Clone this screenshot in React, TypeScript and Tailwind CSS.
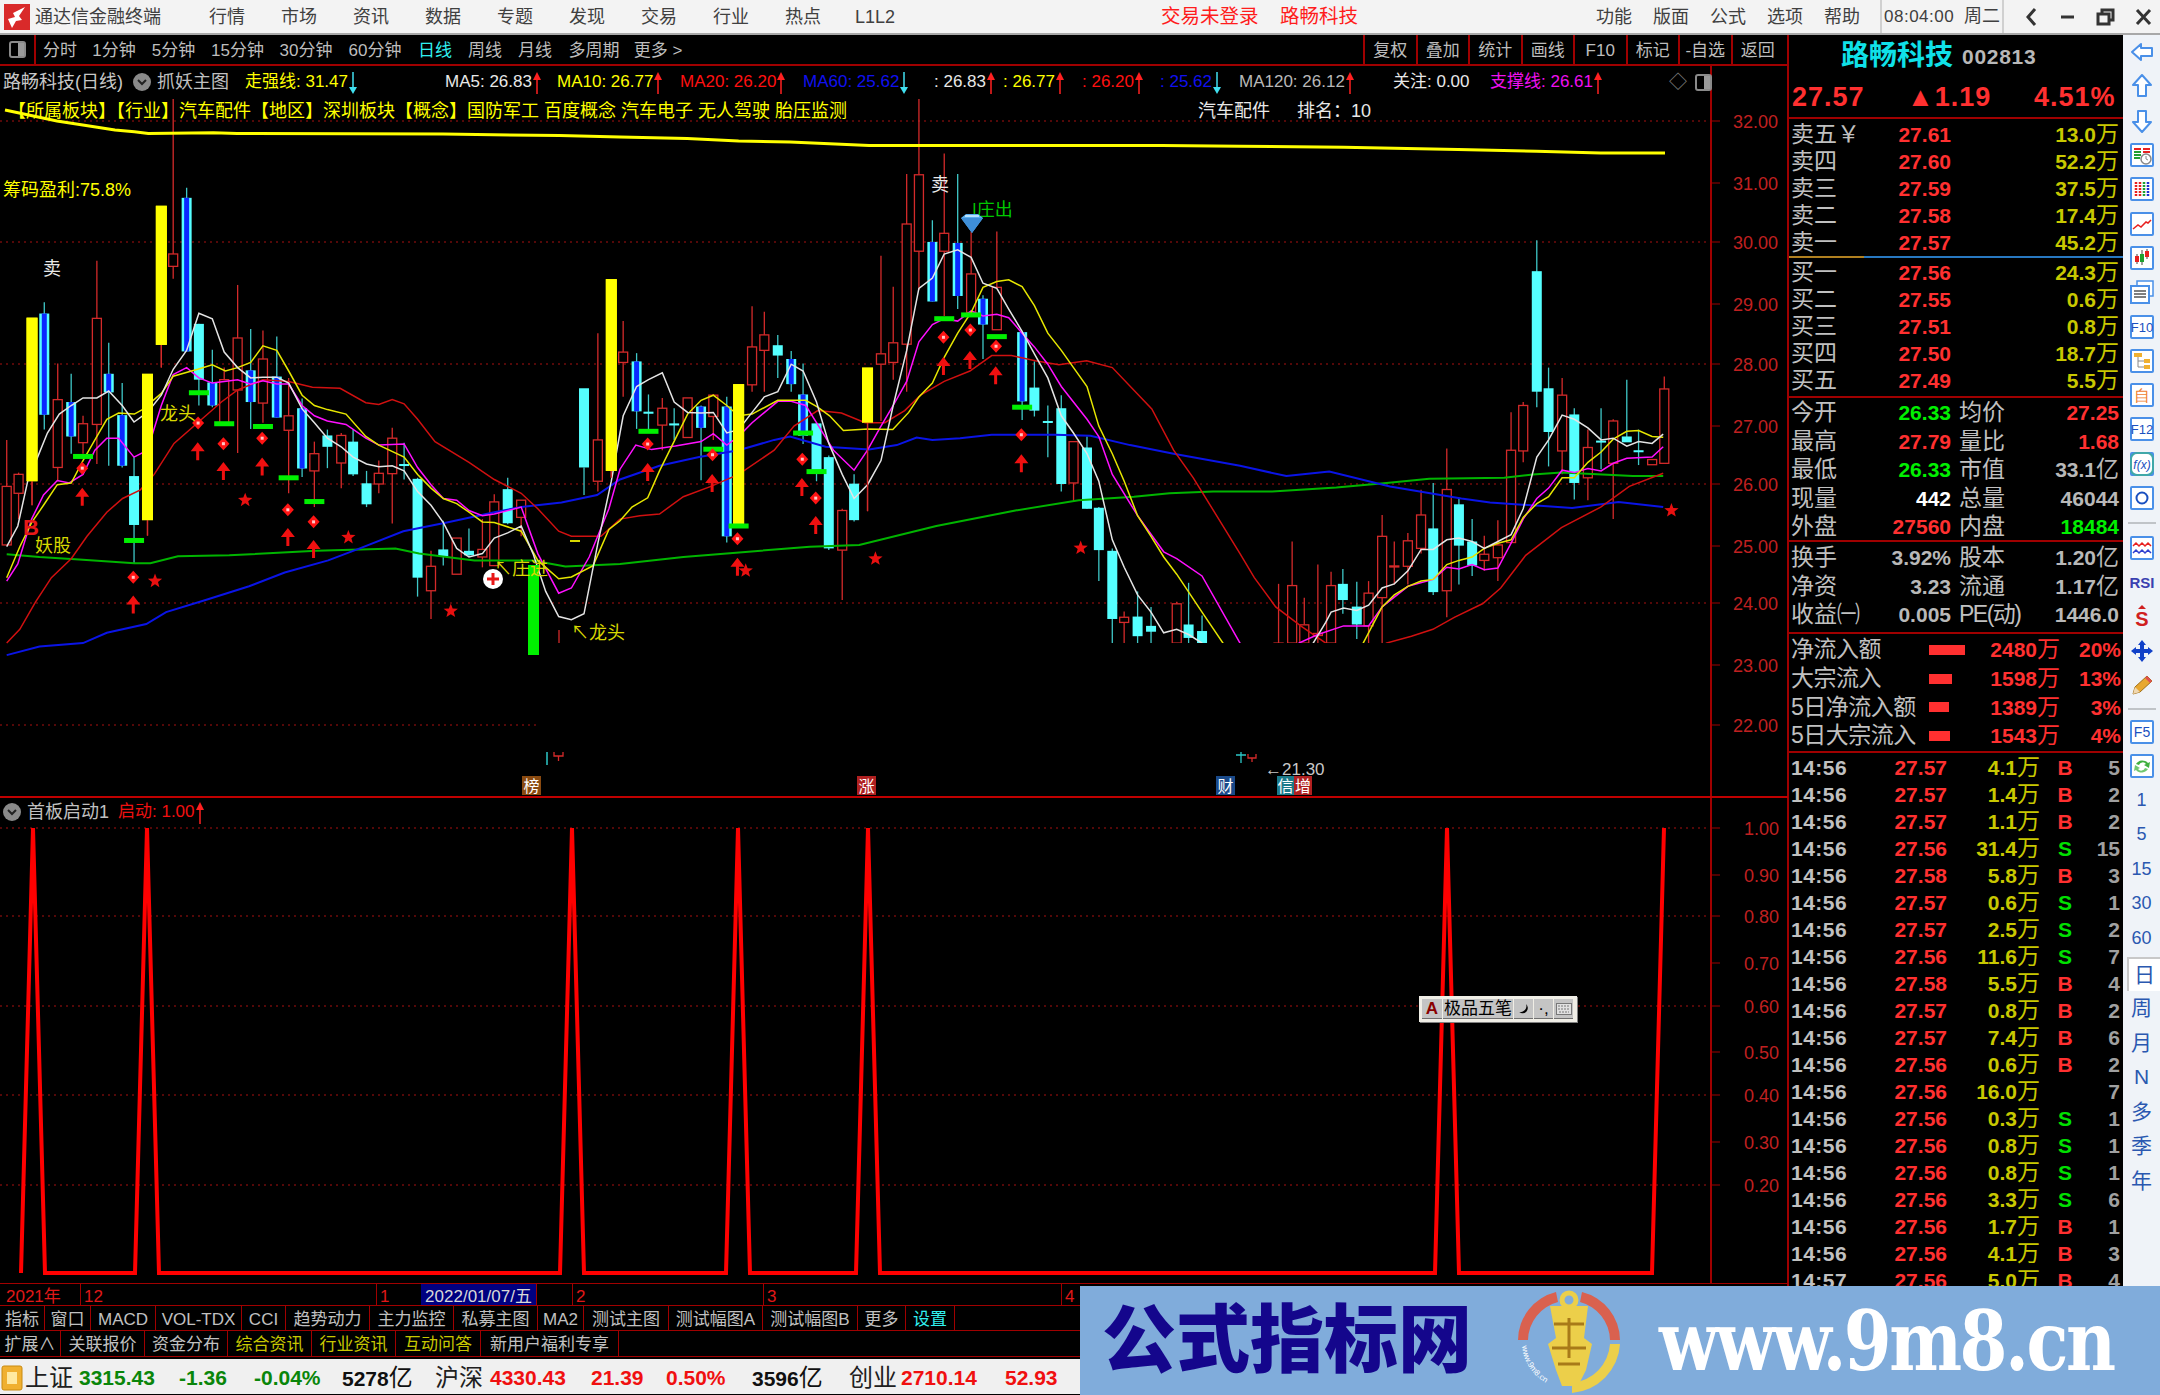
import React from "react";

type Pt = [number, number];
type Candle = [number, number, number, number, number, string];

const A = (x: number, y: number): Pt => [x / 2.529, 130 + y / 2.904];
const B = (x: number, y: number): Pt => [620 + x / 2.529, 130 + y / 2.904];
const C = (x: number, y: number): Pt => [1240 + x / 2.8, 130 + y / 2.904];

const line = (a: number[][], b: number[][], c: number[][]): Pt[] => [
    ...a.map(([x, y]) => A(x, y)),
    ...b.map(([x, y]) => B(x, y)),
    ...c.map(([x, y]) => C(x, y)),
];

const candlesA: Candle[] = [
    [17, 900, 1205, 1035, 1205, "r"], [47, 995, 1130, 1000, 1055, "r"], [81, 1020, 1090, 545, 1020, "y"], [112, 500, 870, 533, 827, "b"],
    [146, 678, 1020, 783, 980, "r"], [180, 708, 940, 790, 890, "b"], [210, 830, 940, 853, 908, "r"], [245, 380, 970, 547, 855, "r"],
    [275, 618, 975, 708, 762, "b"], [309, 735, 980, 828, 975, "b"], [339, 950, 1260, 1005, 1147, "c"], [373, 1133, 1178, 708, 1133, "y"],
    [408, 624, 690, 220, 624, "y"], [438, -90, 432, 360, 396, "r"], [472, 168, 640, 197, 643, "b"], [503, 563, 800, 563, 725, "c"],
    [537, 638, 805, 733, 800, "b"], [567, 690, 850, 725, 850, "r"], [601, 450, 938, 604, 755, "r"], [634, 578, 868, 698, 790, "b"],
    [665, 582, 850, 665, 793, "r"], [700, 600, 835, 716, 835, "b"], [730, 720, 1055, 830, 872, "r"], [764, 780, 1008, 808, 983, "b"],
    [795, 905, 1095, 940, 990, "r"], [828, 870, 982, 887, 920, "c"], [863, 880, 1040, 887, 967, "r"], [893, 870, 1005, 905, 1000, "c"],
    [927, 990, 1095, 1026, 1087, "c"], [958, 960, 1055, 997, 1028, "r"], [992, 865, 1143, 895, 998, "r"], [1022, 908, 1015, 970, 973, "c"],
    [1056, 1010, 1355, 1013, 1300, "c"], [1090, 1222, 1420, 1267, 1338, "r"], [1121, 1135, 1265, 1218, 1238, "c"], [1155, 1185, 1290, 1185, 1290, "r"],
    [1186, 1157, 1240, 1222, 1235, "c"], [1220, 1130, 1270, 1218, 1240, "r"], [1250, 1058, 1265, 1080, 1265, "r"], [1284, 1010, 1145, 1043, 1142, "c"],
    [1318, 1075, 1180, 1075, 1125, "r"], [1477, 980, 1060, 750, 980, "c"], [1512, 590, 1050, 900, 1020, "r"], [1546, 990, 1010, 433, 990, "y"],
];

const candlesB: Candle[] = [
    [8, 555, 775, 645, 675, "r"], [42, 648, 868, 672, 817, "b"], [72, 768, 870, 818, 824, "c"], [107, 778, 930, 808, 857, "r"],
    [137, 808, 900, 852, 858, "c"], [171, 778, 893, 778, 893, "r"], [205, 800, 1017, 803, 865, "b"], [236, 768, 900, 770, 832, "r"],
    [270, 775, 1198, 803, 1180, "b"], [300, 1145, 1150, 738, 1145, "y"], [334, 512, 760, 630, 740, "r"], [365, 528, 760, 595, 640, "r"],
    [399, 595, 720, 625, 655, "c"], [433, 642, 760, 665, 738, "b"], [463, 678, 912, 768, 888, "b"], [497, 850, 1020, 852, 990, "c"],
    [528, 945, 1220, 950, 1215, "c"], [562, 1100, 1365, 1105, 1220, "r"], [592, 1000, 1137, 1027, 1133, "c"], [626, 850, 1107, 690, 850, "y"],
    [660, 365, 845, 650, 680, "r"], [691, 455, 725, 618, 675, "r"], [725, 128, 760, 273, 622, "r"], [756, -90, 465, 130, 352, "r"],
    [790, 262, 498, 325, 498, "b"], [820, 68, 540, 300, 352, "r"], [854, 128, 520, 328, 482, "b"], [888, 295, 530, 418, 530, "r"],
    [918, 480, 665, 490, 565, "b"], [953, 295, 580, 457, 580, "r"], [1017, 590, 842, 587, 788, "b"], [1048, 672, 832, 748, 815, "c"],
    [1082, 800, 950, 845, 850, "c"], [1116, 770, 1050, 808, 1028, "c"], [1147, 905, 1080, 905, 1025, "r"], [1181, 890, 1100, 922, 1100, "c"],
    [1211, 1095, 1310, 1097, 1220, "c"], [1245, 1215, 1490, 1222, 1420, "c"], [1275, 1398, 1490, 1415, 1430, "r"], [1309, 1340, 1490, 1413, 1470, "c"],
    [1343, 1385, 1490, 1440, 1457, "c"], [1408, 1370, 1490, 1376, 1490, "r"], [1438, 1315, 1490, 1436, 1475, "c"], [1472, 1410, 1490, 1455, 1490, "c"],
];

const candlesC: Candle[] = [
    [108, 1318, 1490, 1490, 1490, "r"], [146, 1195, 1490, 1323, 1490, "r"], [180, 1358, 1490, 1437, 1490, "r"], [218, 1262, 1490, 1462, 1468, "r"],
    [255, 1283, 1490, 1323, 1490, "r"], [288, 1275, 1405, 1318, 1365, "c"], [327, 1312, 1478, 1384, 1436, "c"], [360, 1310, 1490, 1345, 1440, "r"],
    [398, 1118, 1490, 1180, 1358, "r"], [432, 1195, 1320, 1266, 1268, "r"], [470, 1170, 1320, 1193, 1267, "r"], [507, 1045, 1230, 1118, 1215, "r"],
    [541, 1025, 1350, 1157, 1342, "c"], [579, 925, 1415, 1044, 1338, "r"], [613, 1068, 1320, 1087, 1207, "c"], [650, 1130, 1295, 1195, 1265, "c"],
    [684, 1178, 1280, 1232, 1250, "r"], [722, 1133, 1310, 1205, 1242, "r"], [759, 820, 1200, 930, 1198, "r"], [793, 790, 965, 800, 932, "r"],
    [831, 320, 805, 410, 760, "c"], [864, 690, 977, 750, 877, "c"], [902, 720, 1000, 770, 932, "r"], [936, 808, 1073, 826, 1025, "c"],
    [974, 870, 1075, 922, 1010, "r"], [1011, 808, 985, 902, 906, "c"], [1045, 840, 1130, 845, 968, "r"], [1083, 725, 905, 890, 907, "c"],
    [1116, 870, 973, 930, 934, "c"], [1154, 957, 972, 957, 972, "r"], [1188, 716, 968, 752, 968, "r"],
];

const white = line(
    [[17, 1210], [45, 1150], [70, 1020], [95, 950], [120, 880], [150, 825], [180, 800], [210, 778], [245, 778], [275, 758], [309, 800], [339, 848], [373, 820], [408, 770], [438, 695], [472, 640], [503, 532], [537, 548], [567, 645], [601, 690], [634, 720], [665, 718], [700, 718], [730, 735], [764, 810], [795, 850], [828, 895], [863, 920], [893, 950], [927, 970], [958, 978], [992, 975], [1022, 990], [1056, 1050], [1090, 1090], [1121, 1140], [1155, 1215], [1186, 1240], [1220, 1230], [1250, 1185], [1284, 1170], [1318, 1150], [1348, 1230], [1380, 1340], [1413, 1413], [1445, 1422], [1477, 1405], [1512, 1200], [1546, 1020]],
    [[0, 880], [8, 830], [42, 745], [72, 725], [107, 705], [137, 790], [171, 820], [205, 822], [236, 820], [270, 880], [300, 870], [334, 820], [365, 775], [399, 760], [433, 680], [463, 700], [497, 790], [528, 910], [562, 1000], [592, 1070], [626, 1030], [660, 960], [691, 800], [725, 640], [756, 460], [790, 430], [820, 360], [854, 348], [888, 370], [918, 445], [953, 460], [983, 520], [1017, 585], [1048, 650], [1082, 720], [1116, 830], [1147, 880], [1181, 940], [1211, 1020], [1245, 1190], [1275, 1270], [1309, 1350], [1343, 1400], [1375, 1460], [1408, 1450], [1438, 1465], [1472, 1490], [1530, 1600]],
    [[170, 1600], [205, 1490], [240, 1430], [255, 1400], [290, 1388], [327, 1395], [360, 1380], [398, 1330], [432, 1318], [470, 1280], [507, 1218], [541, 1218], [579, 1190], [613, 1185], [650, 1195], [684, 1215], [722, 1195], [759, 1175], [793, 1100], [831, 950], [864, 900], [902, 828], [936, 840], [974, 865], [1011, 900], [1045, 895], [1083, 918], [1116, 905], [1154, 910], [1185, 883]]
);

const yellow = line(
    [[17, 1300], [50, 1210], [80, 1140], [110, 1090], [145, 1030], [180, 1025], [210, 960], [240, 900], [270, 840], [300, 822], [340, 825], [360, 812], [408, 765], [438, 715], [500, 695], [537, 682], [570, 700], [601, 690], [634, 675], [665, 627], [700, 640], [730, 700], [764, 770], [795, 800], [828, 812], [875, 825], [925, 890], [958, 915], [1022, 950], [1056, 1000], [1090, 1040], [1121, 1070], [1155, 1085], [1186, 1110], [1220, 1138], [1250, 1140], [1318, 1165], [1360, 1250], [1413, 1303], [1445, 1298], [1500, 1265], [1540, 1160]],
    [[0, 1135], [30, 1095], [70, 1068], [100, 990], [130, 920], [171, 825], [205, 785], [236, 770], [270, 800], [300, 830], [334, 825], [399, 785], [433, 785], [470, 785], [500, 805], [530, 830], [565, 873], [626, 868], [690, 870], [730, 820], [756, 775], [790, 735], [820, 660], [854, 590], [888, 530], [918, 457], [953, 440], [983, 435], [1017, 455], [1048, 510], [1082, 590], [1116, 640], [1147, 690], [1181, 745], [1211, 860], [1245, 940], [1275, 1020], [1309, 1120], [1343, 1180], [1375, 1240], [1408, 1290], [1472, 1400], [1525, 1490], [1570, 1600]],
    [[300, 1600], [345, 1490], [398, 1385], [432, 1350], [470, 1325], [507, 1310], [541, 1305], [579, 1262], [613, 1250], [650, 1240], [684, 1215], [722, 1200], [759, 1190], [793, 1125], [831, 1085], [864, 1065], [902, 1010], [936, 1010], [974, 965], [1011, 935], [1045, 898], [1083, 875], [1116, 873], [1154, 890], [1185, 892]]
);

const magenta = line(
    [[17, 1310], [45, 1260], [80, 1130], [110, 1060], [145, 1018], [175, 1025], [210, 1000], [240, 930], [270, 895], [300, 895], [339, 950], [373, 930], [408, 800], [438, 710], [472, 690], [503, 720], [537, 735], [567, 730], [601, 725], [634, 738], [665, 728], [700, 738], [730, 738], [764, 800], [795, 830], [828, 845], [875, 855], [925, 895], [958, 915], [1022, 912], [1056, 980], [1090, 1030], [1121, 1070], [1155, 1075], [1186, 1105], [1220, 1120], [1250, 1115], [1318, 1095], [1360, 1230], [1413, 1345], [1445, 1330], [1490, 1240], [1540, 1100]],
    [[0, 985], [40, 915], [80, 928], [140, 918], [205, 905], [236, 882], [270, 915], [300, 890], [334, 850], [399, 788], [433, 788], [470, 800], [497, 850], [540, 930], [592, 988], [626, 930], [660, 860], [691, 800], [725, 730], [756, 615], [790, 565], [820, 548], [854, 555], [888, 525], [918, 540], [953, 535], [983, 545], [1017, 590], [1048, 630], [1082, 680], [1116, 745], [1181, 840], [1211, 890], [1245, 1000], [1309, 1120], [1375, 1225], [1408, 1245], [1472, 1295], [1568, 1490], [1600, 1600]],
    [[120, 1600], [165, 1490], [218, 1465], [290, 1440], [360, 1440], [398, 1385], [470, 1325], [541, 1305], [579, 1270], [613, 1275], [650, 1262], [684, 1277], [722, 1272], [759, 1200], [793, 1130], [831, 1070], [864, 1040], [902, 988], [936, 995], [974, 983], [1011, 990], [1045, 968], [1083, 953], [1154, 950], [1185, 920]]
);

const red = line(
    [[17, 1490], [50, 1450], [90, 1370], [130, 1300], [180, 1245], [220, 1180], [270, 1110], [310, 1070], [355, 1045], [390, 1000], [440, 910], [500, 850], [560, 790], [601, 755], [665, 725], [730, 730], [790, 747], [860, 750], [925, 792], [958, 797], [992, 783], [1022, 795], [1056, 840], [1100, 905], [1186, 965], [1250, 1015], [1318, 1055], [1360, 1100], [1413, 1165], [1445, 1180], [1520, 1180]],
    [[0, 1130], [50, 1120], [100, 1115], [160, 1065], [230, 1035], [300, 1000], [390, 930], [440, 860], [500, 815], [560, 822], [620, 850], [670, 850], [720, 815], [760, 770], [820, 730], [885, 700], [940, 655], [990, 655], [1050, 670], [1110, 682], [1180, 670], [1245, 690], [1345, 810], [1400, 930], [1450, 1010], [1568, 1230]],
    [[40, 1300], [100, 1385], [170, 1440], [240, 1490], [300, 1600], [380, 1600], [410, 1490], [480, 1470], [540, 1450], [600, 1415], [680, 1375], [730, 1330], [800, 1235], [900, 1155], [1010, 1095], [1090, 1035], [1185, 997]]
);

const blue = line(
    [[17, 1525], [100, 1500], [210, 1490], [270, 1460], [370, 1435], [420, 1400], [520, 1365], [630, 1325], [720, 1285], [830, 1250], [910, 1215], [1020, 1165], [1130, 1140], [1250, 1110], [1318, 1095], [1420, 1082], [1510, 1060]],
    [[0, 1015], [100, 975], [200, 950], [300, 930], [390, 900], [430, 890], [520, 920], [630, 928], [700, 915], [750, 893], [790, 900], [860, 895], [940, 885], [1100, 885], [1190, 888], [1290, 915], [1400, 940], [1568, 975]],
    [[130, 1005], [250, 992], [420, 1035], [620, 1070], [700, 1082], [850, 1092], [930, 1098], [1060, 1080], [1185, 1095]]
);

const green = line(
    [[17, 1232], [100, 1240], [200, 1247], [340, 1258], [380, 1258], [450, 1238], [580, 1235], [800, 1222], [1000, 1215], [1060, 1230], [1200, 1250], [1348, 1250], [1430, 1268]],
    [[0, 1260], [160, 1240], [480, 1210], [605, 1205], [800, 1150], [1000, 1105], [1160, 1075], [1300, 1065], [1390, 1055], [1500, 1050]],
    [[90, 1050], [270, 1038], [410, 1025], [530, 1013], [740, 1010], [820, 1000], [900, 995], [1100, 1005], [1185, 1005]]
);

const topLine: Pt[] = [
    [5, 110], [57, 121], [115, 130],
    ...line(
        [[340, 5], [375, 10], [540, 8], [600, 10], [1120, 12], [1415, 16]],
        [[0, 20], [170, 25], [300, 32], [430, 35], [530, 40], [630, 45], [1370, 45]],
        [[0, 47], [290, 50], [610, 57], [830, 62], [1010, 67], [1190, 67]]
    ),
];

const ticks = line(
    [[210, 948], [503, 763], [567, 853], [665, 861], [730, 1010], [795, 1079], [339, 1192]],
    [[72, 875], [236, 927], [300, 1150], [463, 880], [497, 992], [820, 548], [888, 537], [953, 600], [1017, 805]],
    []
);
const diamonds = line(
    [[208, 982], [501, 851], [565, 911], [663, 895], [728, 1103], [793, 1138], [337, 1299]],
    [[70, 912], [234, 943], [297, 1187], [461, 956], [495, 1069], [818, 602], [886, 581], [951, 628], [1015, 885]],
    []
);
const arrows = line(
    [[208, 1065], [500, 933], [565, 990], [663, 977], [728, 1182], [793, 1217], [337, 1378]],
    [[70, 993], [233, 1025], [297, 1268], [460, 1037], [495, 1147], [818, 685], [885, 668], [950, 712], [1015, 968]],
    []
);
const stars = line(
    [[620, 1075], [881, 1183], [392, 1310], [1140, 1397]],
    [[318, 1280], [646, 1245], [1165, 1214]],
    [[1208, 1105]]
);

const poly = (pts: Pt[]) => pts.map((p) => `${p[0].toFixed(1)},${p[1].toFixed(1)}`).join(" ");

const starPoints = (cx: number, cy: number, r: number) => {
    const out: string[] = [];
    for (let i = 0; i < 10; i++) {
        const rad = i % 2 === 0 ? r : r * 0.42;
        const a = (Math.PI / 5) * i - Math.PI / 2;
        out.push(`${(cx + rad * Math.cos(a)).toFixed(1)},${(cy + rad * Math.sin(a)).toFixed(1)}`);
    }
    return out.join(" ");
};

const CandleMark = ({ c, conv }: { c: Candle; conv: (x: number, y: number) => Pt }) => {
    const [x, hi, lo, top, bot, t] = c;
    const [px, wy1] = conv(x, hi);
    const wy2 = conv(x, lo)[1];
    const by1 = conv(x, top)[1];
    const by2 = conv(x, bot)[1];
    if (t === "y") {
        return (
            <g>
                <line x1={px} x2={px} y1={wy1} y2={wy2} stroke="#d42a2a" strokeWidth={1.3} />
                <rect x={px - 5.5} y={by1} width={11} height={by2 - by1} fill="#ffff00" />
            </g>
        );
    }
    if (t === "r") {
        return (
            <g>
                <line x1={px} x2={px} y1={wy1} y2={by1} stroke="#d42a2a" strokeWidth={1.3} />
                <line x1={px} x2={px} y1={by2} y2={wy2} stroke="#d42a2a" strokeWidth={1.3} />
                <rect x={px - 4.5} y={by1} width={9} height={Math.max(by2 - by1, 1)} fill="#000" stroke="#d42a2a" strokeWidth={1.3} />
            </g>
        );
    }
    return (
        <g>
            <line x1={px} x2={px} y1={wy1} y2={wy2} stroke="#3fc8c8" strokeWidth={1.3} />
            <rect x={px - 5} y={by1} width={10} height={Math.max(by2 - by1, 2)} fill="#55ffff" />
            {t === "b" && <rect x={px - 2.5} y={by1} width={5} height={by2 - by1} fill="#0a28ff" />}
        </g>
    );
};

const Marks = () => (
    <g>
        {ticks.map((p, i) => (
            <rect key={i} x={p[0] - 10} y={p[1] - 2.5} width={20} height={5} fill="#00f000" />
        ))}
        {diamonds.map((p, i) => (
            <g key={i}>
                <polygon points={`${p[0]},${p[1] - 6.5} ${p[0] + 6},${p[1]} ${p[0]},${p[1] + 6.5} ${p[0] - 6},${p[1]}`} fill="#ff1414" />
                <rect x={p[0] - 1.5} y={p[1] - 1.5} width={3} height={3} fill="#ffc8c8" />
            </g>
        ))}
        {arrows.map((p, i) => (
            <polygon
                key={i}
                points={`${p[0]},${p[1] - 9} ${p[0] + 7},${p[1]} ${p[0] + 1.5},${p[1]} ${p[0] + 1.5},${p[1] + 9} ${p[0] - 1.5},${p[1] + 9} ${p[0] - 1.5},${p[1]} ${p[0] - 7},${p[1]}`}
                fill="#f01010"
            />
        ))}
        {stars.map((p, i) => (
            <polygon key={i} points={starPoints(p[0], p[1], 7.5)} fill="#e81010" />
        ))}
    </g>
);

const MainChart = () => {
    const grid = [121, 242, 364, 484, 603];
    const labels: [string, number][] = [
        ["32.00", 121], ["31.00", 183], ["30.00", 242], ["29.00", 304], ["28.00", 364], ["27.00", 426],
        ["26.00", 484], ["25.00", 546], ["24.00", 603], ["23.00", 665], ["22.00", 725],
    ];
    return (
        <svg className="absolute left-0 top-0 w-[1788px] h-[732px]" viewBox="0 66 1788 732" fontFamily="'Liberation Sans','Noto Sans CJK SC',sans-serif">
            <defs>
                <clipPath id="cut">
                    <rect x={0} y={66} width={560} height={594} />
                    <rect x={560} y={66} width={1228} height={577} />
                </clipPath>
            </defs>
            {grid.map((y) => (
                <line key={y} x1={0} x2={1710} y1={y} y2={y} stroke="#a81010" strokeWidth={1} strokeDasharray="2 4" />
            ))}
            <line x1={0} x2={536} y1={725} y2={725} stroke="#a81010" strokeDasharray="2 4" />
            <g clipPath="url(#cut)">
                {candlesA.map((c, i) => <CandleMark key={i} c={c} conv={A} />)}
                {candlesB.map((c, i) => <CandleMark key={i} c={c} conv={B} />)}
                {candlesC.map((c, i) => <CandleMark key={i} c={c} conv={C} />)}
                <polyline points={poly(green)} fill="none" stroke="#00b400" strokeWidth={2} />
                <polyline points={poly(blue)} fill="none" stroke="#0a14e6" strokeWidth={2} />
                <polyline points={poly(red)} fill="none" stroke="#d01010" strokeWidth={1.5} />
                <polyline points={poly(magenta)} fill="none" stroke="#ff10ff" strokeWidth={1.5} />
                <polyline points={poly(yellow)} fill="none" stroke="#e6e600" strokeWidth={1.5} />
                <polyline points={poly(white)} fill="none" stroke="#e4e4e4" strokeWidth={1.5} />
                {candlesA.filter((c) => c[5] === "y").map((c, i) => <CandleMark key={i} c={c} conv={A} />)}
                {candlesB.filter((c) => c[5] === "y").map((c, i) => <CandleMark key={i} c={c} conv={B} />)}
            </g>
            <polyline points={poly(topLine)} fill="none" stroke="#ffff00" strokeWidth={3} />
            <rect x={528} y={565} width={11} height={90} fill="#00f000" />
            <Marks />
            <line x1={559} x2={559} y1={630} y2={643} stroke="#d42a2a" strokeWidth={1.3} />

            <line x1={547} x2={547} y1={752} y2={765} stroke="#2cc8c8" strokeWidth={1.5} />
            <path d="M554 752v4h9v-4M558.500 756v5" fill="none" stroke="#d42a2a" strokeWidth={1.3} />
            <path d="M1236 755h10M1241 752v11" fill="none" stroke="#2cc8c8" strokeWidth={1.3} />
            <path d="M1248 754v4h8v-4M1252 758v4" fill="none" stroke="#d42a2a" strokeWidth={1.3} />
            <text x={1265} y={775} fontSize={17} fill="#c8c8c8">←21.30</text>

            <text x={3} y={196} fontSize={18} fill="#ffff00">筹码盈利:75.8%</text>
            <text x={52} y={275} fontSize={18} fill="#e8e8e8" textAnchor="middle">卖</text>
            <text x={940} y={191} fontSize={18} fill="#e8e8e8" textAnchor="middle">卖</text>
            <text x={31} y={535} fontSize={22} fontWeight={700} fill="#e81818" textAnchor="middle">B</text>
            <text x={53} y={552} fontSize={18} fill="#d8d800" textAnchor="middle">妖股</text>
            <text x={178} y={420} fontSize={18} fill="#d8d800" textAnchor="middle">龙头</text>
            <text x={494} y={575} fontSize={18} fill="#d8d800">↖庄进</text>
            <text x={571} y={639} fontSize={18} fill="#d8d800">↖龙头</text>
            <text x={972} y={216} fontSize={18} fill="#00c800">|庄出</text>
            <rect x={570} y={540} width={10} height={2} fill="#d8d800" />

            <circle cx={493} cy={579} r={10} fill="#fff" />
            <path d="M493 573v12M487 579h12" stroke="#e81818" strokeWidth={3} />

            <polygon points="961,218 966,214 978,214 983,218 972,233" fill="#58aef0" />
            <polygon points="961,218 983,218 972,233" fill="#3e8ed8" />
            <rect x={965} y={215} width={14} height={2} fill="#b8e2ff" />

            <rect x={522} y={776} width={19} height={19} fill="#8a4a10" />
            <text x={531.500} y={792} fontSize={16} fill="#fff" textAnchor="middle">榜</text>
            <rect x={857} y={776} width={19} height={19} fill="#b02020" />
            <text x={866.500} y={792} fontSize={16} fill="#fff" textAnchor="middle">涨</text>
            <rect x={1216} y={776} width={19} height={19} fill="#1a4a8a" />
            <text x={1225.500} y={792} fontSize={16} fill="#fff" textAnchor="middle">财</text>
            <rect x={1277} y={776} width={17} height={19} fill="#1a7a8a" />
            <text x={1285.500} y={792} fontSize={16} fill="#fff" textAnchor="middle">信</text>
            <rect x={1294} y={776} width={18} height={19} fill="#b02020" />
            <text x={1303} y={792} fontSize={16} fill="#fff" textAnchor="middle">增</text>

            <line x1={1711} x2={1711} y1={66} y2={798} stroke="#a00000" strokeWidth={2} />
            {labels.map(([t, y]) => (
                <g key={t}>
                    <line x1={1711} x2={1720} y1={y} y2={y} stroke="#a00000" />
                    <text x={1733} y={y + 7} fontSize={18} fill="#c02020">{t}</text>
                </g>
            ))}
            <line x1={0} x2={1788} y1={797} y2={797} stroke="#c00000" strokeWidth={2} />
        </svg>
    );
};

const SubChart = () => {
    const peaks = [33, 147, 572, 738, 868, 1447];
    const pts: string[] = [];
    peaks.forEach((x) => pts.push(`${x - 12},1273`, `${x},828`, `${x + 12},1273`));
    pts.push("1652,1273", "1664,828");
    const labels: [string, number][] = [
        ["1.00", 828], ["0.90", 875], ["0.80", 916], ["0.70", 963], ["0.60", 1006], ["0.50", 1052], ["0.40", 1095], ["0.30", 1142], ["0.20", 1185],
    ];
    return (
        <svg className="absolute left-0 top-0 w-[1788px] h-[485px]" viewBox="0 798 1788 485" fontFamily="'Liberation Sans',sans-serif">
            {[828, 916, 1006, 1095, 1185].map((y) => (
                <line key={y} x1={0} x2={1710} y1={y} y2={y} stroke="#a81010" strokeDasharray="2 4" />
            ))}
            <polyline points={pts.join(" ")} fill="none" stroke="#ff0000" strokeWidth={4} />
            <line x1={1711} x2={1711} y1={798} y2={1283} stroke="#a00000" strokeWidth={2} />
            {labels.map(([t, y]) => (
                <g key={t}>
                    <line x1={1711} x2={1720} y1={y} y2={y} stroke="#a00000" />
                    <text x={1744} y={y + 7} fontSize={18} fill="#c02020">{t}</text>
                </g>
            ))}
        </svg>
    );
};

const DownArrow = () => (
    <svg className="w-[10px] h-[24px] inline-block align-middle" viewBox="0 0 10 24">
        <path d="M5 1v18" stroke="#40e0f0" strokeWidth={1.5} />
        <path d="M1 16h8l-4 7z" fill="#40e0f0" />
    </svg>
);

const UpArrow = () => (
    <svg className="w-[10px] h-[24px] inline-block align-middle" viewBox="0 0 10 24">
        <path d="M5 6v17" stroke="#ff2020" strokeWidth={1.5} />
        <path d="M1 9h8L5 1z" fill="#ff2020" />
    </svg>
);

const RoundChevron = () => (
    <svg className="block w-[18px] h-[18px]" viewBox="0 0 18 18">
        <circle cx={9} cy={9} r={9} fill="#8a8a8a" />
        <path d="M5 7l4 4 4-4" fill="none" stroke="#222" strokeWidth={2} />
    </svg>
);

const TitleBar = () => (
    <div className="h-[35px] flex items-center bg-[#f3f3f3] border-b-2 border-[#a8a8a8] text-[18px] text-[#404040]">
        <svg className="w-[26px] h-[26px] ml-[4px] shrink-0" viewBox="0 0 26 26">
            <rect width={26} height={26} fill="#d92a2a" />
            <path d="M21 3 9 9l2 4-7 2 4 9 4-7 6-1-3-4z" fill="#fff" />
        </svg>
        <span className="ml-[5px] w-[156px] pt-[1px]">通达信金融终端</span>
        {["行情", "市场", "资讯", "数据", "专题", "发现", "交易", "行业", "热点", "L1L2"].map((t) => (
            <span key={t} className="w-[72px] text-center pt-[1px]">{t}</span>
        ))}
        <span className="ml-[250px] w-[119px] pt-[1px] text-[19.500px] text-[#ff1c1c]">交易未登录</span>
        <span className="w-[316px] pt-[1px] text-[19.500px] text-[#ff1c1c]">路畅科技</span>
        {["功能", "版面", "公式", "选项", "帮助"].map((t) => (
            <span key={t} className="w-[57px] pt-[1px]">{t}</span>
        ))}
        <div className="h-full w-[124px] border-x-2 border-[#d0d0d0] flex items-center justify-between px-[2px] -ml-[1px]">
            <span className="text-[17px] tracking-[0.5px]">08:04:00</span>
            <span>周二</span>
        </div>
        <svg className="w-[150px] h-[24px] shrink-0" viewBox="0 0 150 24" fill="none" stroke="#333" strokeWidth={3}>
            <path d="M31 4l-7 8 7 8" />
            <path d="M57 12h13" />
            <rect x={94} y={9} width={11} height={10} />
            <path d="M98 8V5h11v10h-3" />
            <path d="M133 5l13 14M146 5l-13 14" />
        </svg>
    </div>
);

const PeriodBar = () => {
    const periods = [
        { t: "分时", w: "w-[48px]" }, { t: "1分钟", w: "w-[60px]" }, { t: "5分钟", w: "w-[59px]" }, { t: "15分钟", w: "w-[69px]" }, { t: "30分钟", w: "w-[68px]" },
        { t: "60分钟", w: "w-[70px]" }, { t: "日线", w: "w-[50px]" }, { t: "周线", w: "w-[50px]" }, { t: "月线", w: "w-[50px]" }, { t: "多周期", w: "w-[68px]" }, { t: "更多 >", w: "w-[60px]" },
    ];
    const buttons = ["复权", "叠加", "统计", "画线", "F10", "标记", "-自选", "返回"];
    return (
        <div className="h-[31px] flex items-center bg-black border-b-2 border-[#a00000] text-[17px] text-[#bdbdbd]">
            <div className="w-[36px] h-full border-r-2 border-[#a00000] flex items-center justify-center">
                <div className="w-[17px] h-[17px] border-2 border-[#8a8a8a] rounded-[3px] flex justify-end">
                    <div className="w-[6px] h-full bg-[#9a9a9a]" />
                </div>
            </div>
            {periods.map((p) => (
                <span key={p.t} className={`${p.w} pt-[3px] text-center whitespace-nowrap ${p.t === "日线" ? "text-[#30f0f0]" : ""}`}>{p.t}</span>
            ))}
            <div className="ml-auto h-full flex">
                {buttons.map((b) => (
                    <span key={b} className="w-[52.500px] h-full pt-[3px] border-l-2 border-[#a00000] flex items-center justify-center">{b}</span>
                ))}
                <span className="w-[4px]" />
            </div>
        </div>
    );
};

const InfoRows = () => (
    <div className="relative text-[17px] whitespace-nowrap">
        <div className="h-[30px] pt-[2px] flex items-center">
            <span className="w-[133px] pl-[3px] text-[18px] text-[#c8c8c8]">路畅科技(日线)</span>
            <span className="w-[24px]">
                <RoundChevron />
            </span>
            <span className="w-[88px] text-[18px] text-[#c0c0c0]">抓妖主图</span>
            <span className="w-[200px] text-[#ffff00]">走强线: 31.47<DownArrow /></span>
            <span className="w-[112px] text-[#e8e8e8]">MA5: 26.83<UpArrow /></span>
            <span className="w-[123px] text-[#ffff00]">MA10: 26.77<UpArrow /></span>
            <span className="w-[123px] text-[#ff1010]">MA20: 26.20<UpArrow /></span>
            <span className="w-[131px] text-[#1010f0]">MA60: 25.62<DownArrow /></span>
            <span className="w-[69px] text-[#e8e8e8]">: 26.83<UpArrow /></span>
            <span className="w-[79px] text-[#ffff00]">: 26.77<UpArrow /></span>
            <span className="w-[78px] text-[#ff1010]">: 26.20<UpArrow /></span>
            <span className="w-[79px] text-[#1010f0]">: 25.62<DownArrow /></span>
            <span className="w-[154px] text-[#b8b8b8]">MA120: 26.12<UpArrow /></span>
            <span className="w-[97px] text-[#e8e8e8]">关注: 0.00</span>
            <span className="w-[179px] text-[#f010f0]">支撑线: 26.61<UpArrow /></span>
            <span className="w-[26px] text-[#808080] text-[18px]">◇</span>
            <div className="w-[17px] h-[17px] border-2 border-[#8a8a8a] rounded-[3px] flex justify-end">
                <div className="w-[6px] h-full bg-[#9a9a9a]" />
            </div>
        </div>
        <div className="h-[30px] flex items-center text-[18px] text-[#ffff00] pl-[8px]">
            <span className="w-[1190px]">【所属板块】【行业】汽车配件【地区】深圳板块【概念】国防军工 百度概念 汽车电子 无人驾驶 胎压监测</span>
            <span className="w-[99px] text-[#e8e8e8]">汽车配件</span>
            <span className="text-[#e8e8e8]">排名：10</span>
        </div>
    </div>
);

const ImeBar = () => (
    <div className="absolute left-[1419px] top-[198px] h-[26px] w-[158px] bg-[#f0eee6] flex items-center gap-[1px] pl-[3px] text-[17px] text-black shadow-[1px_1px_0_#808080]">
        <span className="w-[20px] h-[20px] bg-[#c4c4c4] border-b border-[#707070] flex items-center justify-center font-bold text-[#8a0000]">A</span>
        <span className="w-[70px] h-[20px] bg-[#c4c4c4] border-b border-[#707070] flex items-center justify-center whitespace-nowrap">极品五笔</span>
        <span className="w-[19px] h-[20px] bg-[#c4c4c4] border-b border-[#707070] flex items-center justify-center">
            <svg className="w-[12px] h-[12px]" viewBox="0 0 12 12"><path d="M8 1a5 5 0 1 1-7 8 6 6 0 0 0 7-8z" fill="#000" /></svg>
        </span>
        <span className="w-[19px] h-[20px] bg-[#c4c4c4] border-b border-[#707070] flex items-center justify-center">·,</span>
        <span className="w-[19px] h-[20px] bg-[#c4c4c4] border-b border-[#707070] flex items-center justify-center">
            <svg className="w-[16px] h-[12px]" viewBox="0 0 16 12"><rect x={0.5} y={0.5} width={15} height={11} fill="#e0e0e0" stroke="#777" /><path d="M2 3h12M2 6h12M3 9h10" stroke="#777" strokeDasharray="2 1" /></svg>
        </span>
    </div>
);

const DateRow = () => (
    <div className="h-[23px] flex items-stretch bg-black border-y border-[#a00000] text-[17px] text-[#e01818]">
        <span className="w-[81px] pl-[6px] border-r border-[#a00000]">2021年</span>
        <span className="w-[296px] pl-[3px] border-r border-[#a00000]">12</span>
        <span className="w-[44px] pl-[3px]">1</span>
        <span className="w-[116px] bg-[#000080] text-[#d8d8d8] text-center border-r border-[#a00000]">2022/01/07/五</span>
        <span className="w-[35px]" />
        <span className="w-[191px] pl-[3px] border-l border-[#a00000]">2</span>
        <span className="w-[298px] pl-[3px] border-l border-[#a00000]">3</span>
        <span className="pl-[3px] border-l border-[#a00000] grow">4</span>
    </div>
);

const TabRow = ({ items, h }: { items: { t: string; w: string; c?: string }[]; h: string }) => (
    <div className={`${h} flex bg-black border-b border-[#a00000] text-[17px] text-[#c0c0c0]`}>
        {items.map((it) => (
            <span key={it.t} className={`${it.w} ${it.c ?? ""} pt-[3px] border-r border-[#a00000] flex items-center justify-center whitespace-nowrap overflow-hidden`}>{it.t}</span>
        ))}
    </div>
);

const StatusBar = () => (
    <div className="h-[35px] pt-[2px] flex items-center bg-[#f0f0f0] text-[21px] font-bold whitespace-nowrap overflow-hidden">
        <svg className="w-[22px] h-[26px] ml-[1px] mr-[2px] shrink-0" viewBox="0 0 22 26">
            <rect x={1} y={1} width={20} height={24} rx={2} fill="#f0b030" stroke="#c88a10" />
            <rect x={6} y={7} width={10} height={12} fill="#ffe9a0" />
        </svg>
        <span className="w-[54px] font-normal text-[24px] text-[#202020]">上证</span>
        <span className="w-[100px] text-[#0a860a]">3315.43</span>
        <span className="w-[75px] text-[#0a860a]">-1.36</span>
        <span className="w-[88px] text-[#0a860a]">-0.04%</span>
        <span className="w-[93px] text-[#101010]">5278<span className="font-normal text-[24px]">亿</span></span>
        <span className="w-[55px] font-normal text-[24px] text-[#202020]">沪深</span>
        <span className="w-[101px] text-[#f01010]">4330.43</span>
        <span className="w-[75px] text-[#f01010]">21.39</span>
        <span className="w-[86px] text-[#f01010]">0.50%</span>
        <span className="w-[97px] text-[#101010]">3596<span className="font-normal text-[24px]">亿</span></span>
        <span className="w-[52px] font-normal text-[24px] text-[#202020]">创业</span>
        <span className="w-[104px] text-[#f01010]">2710.14</span>
        <span className="text-[#f01010]">52.93</span>
    </div>
);

const Wan = ({ children }: { children: string }) => <span className="text-[23px] leading-none font-normal">{children}</span>;

const QuoteRow = ({ label, price, vol }: { label: string; price: string; vol: string }) => (
    <div className="h-[27px] flex items-center">
        <span className="w-[70px] text-[23px] font-normal text-[#c0c0c0] whitespace-nowrap">{label}</span>
        <span className="w-[90px] text-right text-[#ff3030]">{price}</span>
        <span className="w-[168px] text-right text-[#c8c800]">{vol}<Wan>万</Wan></span>
    </div>
);

const HalfRow = ({ a, av, ac, b, bv, bc, h }: { a: string; av: string; ac: string; b: React.ReactNode; bv: React.ReactNode; bc: string; h: string }) => (
    <div className={`${h} pt-[2px] flex items-center`}>
        <span className="w-[60px] text-[23px] font-normal text-[#c0c0c0] whitespace-nowrap">{a}</span>
        <span className={`w-[100px] text-right ${ac}`}>{av}</span>
        <span className="w-[8px]" />
        <span className="w-[60px] text-[23px] font-normal text-[#c0c0c0] whitespace-nowrap">{b}</span>
        <span className={`w-[100px] text-right ${bc}`}>{bv}</span>
    </div>
);

const FlowRow = ({ label, bar, val, pct }: { label: string; bar: string; val: string; pct: string }) => (
    <div className="h-[28.700px] pt-[3px] flex items-center">
        <span className="w-[138px] text-[23px] font-normal text-[#c0c0c0] whitespace-nowrap tracking-[-0.5px]">{label}</span>
        <span className="w-[61px]"><span className={`block h-[10px] bg-[#ff3030] ${bar}`} /></span>
        <span className="w-[47px] text-right text-[#ff3030]">{val}</span>
        <span className="text-[23px] leading-none font-normal text-[#ff3030] w-[23px]">万</span>
        <span className="w-[61px] text-right text-[#ff3030]">{pct}</span>
    </div>
);

const tickRows: [string, string, string, string, string][] = [
    ["14:56", "27.57", "4.1", "B", "5"], ["14:56", "27.57", "1.4", "B", "2"], ["14:56", "27.57", "1.1", "B", "2"], ["14:56", "27.56", "31.4", "S", "15"],
    ["14:56", "27.58", "5.8", "B", "3"], ["14:56", "27.57", "0.6", "S", "1"], ["14:56", "27.57", "2.5", "S", "2"], ["14:56", "27.56", "11.6", "S", "7"],
    ["14:56", "27.58", "5.5", "B", "4"], ["14:56", "27.57", "0.8", "B", "2"], ["14:56", "27.57", "7.4", "B", "6"], ["14:56", "27.56", "0.6", "B", "2"],
    ["14:56", "27.56", "16.0", "", "7"], ["14:56", "27.56", "0.3", "S", "1"], ["14:56", "27.56", "0.8", "S", "1"], ["14:56", "27.56", "0.8", "S", "1"],
    ["14:56", "27.56", "3.3", "S", "6"], ["14:56", "27.56", "1.7", "B", "1"], ["14:56", "27.56", "4.1", "B", "3"], ["14:57", "27.56", "5.0", "B", "4"],
];

const QuotePanel = () => (
    <div className="w-[336px] h-full bg-black border-l-2 border-[#a00000] overflow-hidden text-[21px] font-bold leading-none">
        <div className="h-[42px] flex items-center pl-[52px]">
            <span className="w-[121px] text-[28px] text-[#10e0e8] whitespace-nowrap">路畅科技</span>
            <span className="text-[#b8b8b8] tracking-[0.7px]">002813</span>
        </div>
        <div className="h-[40px] flex items-center pl-[3px] text-[#ff3030] text-[27px] tracking-[1px]">
            <span className="w-[115px]">27.57</span>
            <span className="w-[127px]">▲1.19</span>
            <span>4.51%</span>
        </div>
        <div className="border-t-2 border-[#a00000] pl-[2px] pt-[1.500px]">
            <QuoteRow label="卖五￥" price="27.61" vol="13.0" />
            <QuoteRow label="卖四" price="27.60" vol="52.2" />
            <QuoteRow label="卖三" price="27.59" vol="37.5" />
            <QuoteRow label="卖二" price="27.58" vol="17.4" />
            <QuoteRow label="卖一" price="27.57" vol="45.2" />
        </div>
        <div className="h-[2px] flex"><div className="w-[75px] bg-[#b08020]" /><div className="grow bg-[#2878c0]" /></div>
        <div className="pl-[2px] pt-[1.500px] pb-[1.500px]">
            <QuoteRow label="买一" price="27.56" vol="24.3" />
            <QuoteRow label="买二" price="27.55" vol="0.6" />
            <QuoteRow label="买三" price="27.51" vol="0.8" />
            <QuoteRow label="买四" price="27.50" vol="18.7" />
            <QuoteRow label="买五" price="27.49" vol="5.5" />
        </div>
        <div className="border-t-2 border-[#a00000] pl-[2px]">
            <HalfRow h="h-[28.500px]" a="今开" av="26.33" ac="text-[#00f000]" b="均价" bv="27.25" bc="text-[#ff3030]" />
            <HalfRow h="h-[28.500px]" a="最高" av="27.79" ac="text-[#ff3030]" b="量比" bv="1.68" bc="text-[#ff3030]" />
            <HalfRow h="h-[28.500px]" a="最低" av="26.33" ac="text-[#00f000]" b="市值" bv={<>33.1<Wan>亿</Wan></>} bc="text-[#b8b8b8]" />
            <HalfRow h="h-[28.500px]" a="现量" av="442" ac="text-white" b="总量" bv="46044" bc="text-[#b8b8b8]" />
            <HalfRow h="h-[28.500px]" a="外盘" av="27560" ac="text-[#ff3030]" b="内盘" bv="18484" bc="text-[#00f000]" />
        </div>
        <div className="border-t-2 border-[#a00000] pl-[2px] pb-[4px]">
            <HalfRow h="h-[28.700px]" a="换手" av="3.92%" ac="text-[#b8b8b8]" b="股本" bv={<>1.20<Wan>亿</Wan></>} bc="text-[#b8b8b8]" />
            <HalfRow h="h-[28.700px]" a="净资" av="3.23" ac="text-[#b8b8b8]" b="流通" bv={<>1.17<Wan>亿</Wan></>} bc="text-[#b8b8b8]" />
            <HalfRow h="h-[28.700px]" a="收益㈠" av="0.005" ac="text-[#b8b8b8]" b={<span className="tracking-[-1.500px]">PE(动)</span>} bv="1446.0" bc="text-[#b8b8b8]" />
        </div>
        <div className="border-t-2 border-[#a00000] pl-[2px] pb-[2px]">
            <FlowRow label="净流入额" bar="w-[36px]" val="2480" pct="20%" />
            <FlowRow label="大宗流入" bar="w-[23px]" val="1598" pct="13%" />
            <FlowRow label="5日净流入额" bar="w-[20px]" val="1389" pct="3%" />
            <FlowRow label="5日大宗流入" bar="w-[21px]" val="1543" pct="4%" />
        </div>
        <div className="border-t-2 border-[#a00000] pl-[2px]">
            {tickRows.map((r, i) => (
                <div key={i} className="h-[27px] pt-[3px] flex items-center">
                    <span className="w-[62px] text-[#c0c0c0] tracking-[0.5px]">{r[0]}</span>
                    <span className="w-[94px] text-right text-[#ff3030]">{r[1]}</span>
                    <span className="w-[93px] text-right text-[#c8c800]">{r[2]}<Wan>万</Wan></span>
                    <span className={`w-[50px] text-center ${r[3] === "B" ? "text-[#ff3030]" : "text-[#00e000]"}`}>{r[3]}</span>
                    <span className="w-[30px] text-right text-[#a0a0a0]">{r[4]}</span>
                </div>
            ))}
        </div>
    </div>
);

const Box = ({ children }: { children: React.ReactNode }) => (
    <svg className="w-[24px] h-[24px]" viewBox="0 0 24 24" fontFamily="'Liberation Sans',sans-serif">
        <rect x={1} y={1} width={22} height={22} rx={1} fill="#fff" stroke="#4a90e8" strokeWidth={2} />
        {children}
    </svg>
);

const toolIcons: React.ReactNode[] = [
    <svg key="l" className="w-[24px] h-[24px]" viewBox="0 0 24 24"><path d="M2 12 11 4v4h11v8H11v4z" fill="#fff" stroke="#4a90e8" strokeWidth={2} strokeLinejoin="round" /></svg>,
    <svg key="u" className="w-[24px] h-[24px]" viewBox="0 0 24 24"><path d="M12 1 3 11h5v11h8V11h5z" fill="#fff" stroke="#4a90e8" strokeWidth={2} strokeLinejoin="round" /></svg>,
    <svg key="d" className="w-[24px] h-[24px]" viewBox="0 0 24 24"><path d="M12 23 3 13h5V2h8v11h5z" fill="#fff" stroke="#4a90e8" strokeWidth={2} strokeLinejoin="round" /></svg>,
    <Box key="q"><path d="M4 6h7M13 6h7M13 9h7" stroke="#e82020" strokeWidth={2} /><path d="M4 9h7M4 12h7M4 15h6" stroke="#20a030" strokeWidth={2} /><circle cx={16} cy={16} r={5} fill="#fff" stroke="#888" strokeWidth={1.5} /><path d="M16 13v3l2 1" stroke="#888" fill="none" /></Box>,
    <Box key="t"><path d="M6 5v14M10 5v14" stroke="#e82020" strokeWidth={2.5} strokeDasharray="2 1" /><path d="M14 5v14" stroke="#20a030" strokeWidth={2.5} strokeDasharray="2 1" /><path d="M18 5v14" stroke="#2030d0" strokeWidth={2.5} strokeDasharray="2 1" /></Box>,
    <Box key="c"><path d="M3 17l5-4 3 2 5-5 2 1 3-3" fill="none" stroke="#e82020" strokeWidth={1.5} /></Box>,
    <Box key="k"><path d="M7 8v10M12 4v15M17 3v10" stroke="#444" /><rect x={5} y={10} width={4} height={6} fill="#e82020" /><rect x={10} y={8} width={4} height={8} fill="#20a030" /><rect x={15} y={5} width={4} height={6} fill="#e82020" /></Box>,
    <svg key="w" className="w-[24px] h-[24px]" viewBox="0 0 24 24"><rect x={7} y={1} width={16} height={15} fill="#fff" stroke="#4a90e8" strokeWidth={1.5} /><rect x={1} y={6} width={18} height={17} fill="#fff" stroke="#4a90e8" strokeWidth={2} /><path d="M4 11h12M4 14h12M4 17h12" stroke="#555" strokeWidth={1.5} /></svg>,
    <Box key="f10"><text x={12} y={17} fontSize={13} fill="#1a50c0" textAnchor="middle">F10</text></Box>,
    <Box key="tr"><path d="M8 8v10h6M8 12h6" fill="none" stroke="#888" /><rect x={4} y={4} width={8} height={4} fill="#f0b030" /><rect x={14} y={10} width={6} height={4} fill="#f0b030" /><rect x={14} y={16} width={6} height={4} fill="#f0b030" /></Box>,
    <Box key="z"><text x={12} y={18} fontSize={16} fill="#f08030" textAnchor="middle">自</text></Box>,
    <Box key="f12"><text x={12} y={17} fontSize={13} fill="#1a50c0" textAnchor="middle">F12</text></Box>,
    <Box key="fx"><rect x={1} y={1} width={22} height={22} rx={6} fill="#fff" stroke="#40a8a8" strokeWidth={2} /><text x={12} y={17} fontSize={12} fontStyle="italic" fill="#1a50c0" textAnchor="middle">f(x)</text></Box>,
    <Box key="o"><circle cx={12} cy={12} r={5.500} fill="none" stroke="#1a50c0" strokeWidth={2} /></Box>,
    "sep",
    <Box key="wv"><path d="M3 10l3-3 3 3 3-3 3 3 3-3 3 3" fill="none" stroke="#e82020" strokeWidth={1.5} /><path d="M3 17l3-3 3 3 3-3 3 3 3-3 3 3" fill="none" stroke="#3040d0" strokeWidth={1.5} /></Box>,
    <svg key="rsi" className="w-[28px] h-[24px]" viewBox="0 0 28 24" fontFamily="'Liberation Sans',sans-serif"><text x={14} y={17} fontSize={15} fontWeight={700} fill="#3a40b0" textAnchor="middle">RSI</text></svg>,
    <svg key="s" className="w-[24px] h-[28px]" viewBox="0 0 24 28" fontFamily="'Liberation Sans',sans-serif"><path d="M8 6l4-4 4 4z" fill="#d02020" /><text x={12} y={23} fontSize={20} fontWeight={700} fill="#d02020" textAnchor="middle">S</text></svg>,
    <svg key="m" className="w-[24px] h-[24px]" viewBox="0 0 24 24"><path d="M12 1l4 5h-2v4h4V8l5 4-5 4v-2h-4v4h2l-4 5-4-5h2v-4H6v2l-5-4 5-4v2h4V6H8z" fill="#1040c8" /></svg>,
    <svg key="p" className="w-[24px] h-[24px]" viewBox="0 0 24 24"><path d="M3 21l2-7L17 3l5 5L10 19z" fill="#e8a830" stroke="#a07018" /><path d="M3 21l2-7 5 5z" fill="#f0d8b0" /><path d="M17 3l5 5 -2 2-5-5z" fill="#e05050" /></svg>,
    "sep",
    <Box key="f5"><text x={12} y={17} fontSize={14} fill="#1a50c0" textAnchor="middle">F5</text></Box>,
    <Box key="rf"><path d="M6 10a7 6 0 0 1 12-1l2-1-1 6-5-3 2-1a4 4 0 0 0-7 1z" fill="#40b040" /><path d="M18 15a7 6 0 0 1-12 1l-2 1 1-6 5 3-2 1a4 4 0 0 0 7-1z" fill="#70c870" /></Box>,
];

const SideBar = () => (
    <div className="w-[37px] h-full bg-[#eff3f8] flex flex-col items-center text-[21px] text-[#2a58b0]">
        {toolIcons.map((ic, i) =>
            ic === "sep" ? (
                <div key={i} className={`${i === 14 ? "h-[16px]" : "h-[12px]"} w-full shrink-0 flex items-center pl-[5px]`}>
                    <div className="w-[28px] h-[2px] bg-[#c0c4c8]" />
                </div>
            ) : (
                <div key={i} className="h-[34.300px] shrink-0 flex items-center justify-center">{ic}</div>
            )
        )}
        {["1", "5", "15", "30", "60"].map((t) => (
            <div key={t} className="h-[34.500px] shrink-0 flex items-center justify-center text-[18px]">{t}</div>
        ))}
        <div className="h-[34px] mt-[1px] shrink-0 w-[33px] self-end flex items-center justify-center bg-white border-t-2 border-l-2 border-[#c8c8c8]">日</div>
        {["周", "月", "N", "多", "季", "年"].map((t) => (
            <div key={t} className="h-[34.500px] shrink-0 flex items-center justify-center">{t}</div>
        ))}
    </div>
);

const Banner = () => (
    <div className="absolute right-0 bottom-0 w-[1080px] h-[109px] bg-[#80acdb] flex items-center overflow-hidden">
        <span className="ml-[22px] w-[412px] shrink-0 text-[74px] leading-none font-black text-[#14068c] whitespace-nowrap">公式指标网</span>
        <svg className="w-[110px] h-[106px] shrink-0" viewBox="0 0 110 106" fontFamily="'Liberation Sans',sans-serif">
            <defs>
                <path id="ringText" d="M8 58A47 47 0 0 0 46 100" fill="none" />
            </defs>
            <path d="M4 52A50 50 0 0 1 42 4l2 10A40 40 0 0 0 14 52z" fill="#d9614f" />
            <path d="M106 52A50 50 0 0 0 68 4l-2 10A40 40 0 0 1 96 52z" fill="#d9614f" />
            <path d="M106 56A52 52 0 0 1 58 105V95A42 42 0 0 0 96 56z" fill="#eccf4a" />
            <text fontSize={8} fill="#fff"><textPath href="#ringText">www.9m8.cn</textPath></text>
            <circle cx={55} cy={12} r={7} fill="none" stroke="#eccf4a" strokeWidth={5} />
            <path d="M36 18h38l-4 32 8 6-6 26-8 16H48l-6-16-8-26 8-6z" fill="#eccf4a" />
            <path d="M40 36h30M38 60h34M44 76h22M55 30v40" stroke="#a87a18" strokeWidth={3} fill="none" />
        </svg>
        <span className="ml-[35px] shrink-0 origin-left scale-x-[0.84] text-[82px] leading-none font-bold text-white whitespace-nowrap [font-family:'DejaVu_Serif',serif] tracking-[-3px]">www.9m8.cn</span>
    </div>
);

export default function App() {
    const row1 = [
        { t: "指标", w: "w-[45px]" }, { t: "窗口", w: "w-[46px]" }, { t: "MACD", w: "w-[65px]" }, { t: "VOL-TDX", w: "w-[86px]" }, { t: "CCI", w: "w-[44px]" },
        { t: "趋势动力", w: "w-[84px]" }, { t: "主力监控", w: "w-[84px]" }, { t: "私募主图", w: "w-[84px]" }, { t: "MA2", w: "w-[46px]" }, { t: "测试主图", w: "w-[85px]" },
        { t: "测试幅图A", w: "w-[94px]" }, { t: "测试幅图B", w: "w-[95px]" }, { t: "更多", w: "w-[48px]" }, { t: "设置", w: "w-[49px]", c: "text-[#30f0f0]" },
    ];
    const row2 = [
        { t: "扩展∧", w: "w-[61px]" }, { t: "关联报价", w: "w-[84px]" }, { t: "资金分布", w: "w-[83px]" }, { t: "综合资讯", w: "w-[84px]", c: "text-[#c8c800]" },
        { t: "行业资讯", w: "w-[84px]", c: "text-[#c8c800]" }, { t: "互动问答", w: "w-[85px]", c: "text-[#c8c800]" }, { t: "新用户福利专享", w: "w-[138px]" },
    ];
    return (
        <div className="relative w-[2160px] h-[1395px] overflow-hidden bg-black [font-family:'Liberation_Sans','Noto_Sans_CJK_SC',sans-serif]">
            <TitleBar />
            <div className="flex h-[1360px]">
                <div className="w-[1787px] flex flex-col">
                    <PeriodBar />
                    <div className="relative h-[732px] bg-black">
                        <MainChart />
                        <InfoRows />
                    </div>
                    <div className="relative h-[485px] bg-black">
                        <SubChart />
                        <div className="relative h-[28px] flex items-center text-[17px] whitespace-nowrap">
                            <span className="ml-[3px]"><RoundChevron /></span>
                            <span className="ml-[6px] w-[91px] text-[18px] text-[#c0c0c0]">首板启动1</span>
                            <span className="text-[#f01010]">启动: 1.00<UpArrow /></span>
                        </div>
                        <ImeBar />
                    </div>
                    <DateRow />
                    <TabRow items={row1} h="h-[25px]" />
                    <TabRow items={row2} h="h-[26px]" />
                    <div className="h-[2px] bg-black" />
                    <StatusBar />
                </div>
                <QuotePanel />
                <SideBar />
            </div>
            <Banner />
        </div>
    );
}
